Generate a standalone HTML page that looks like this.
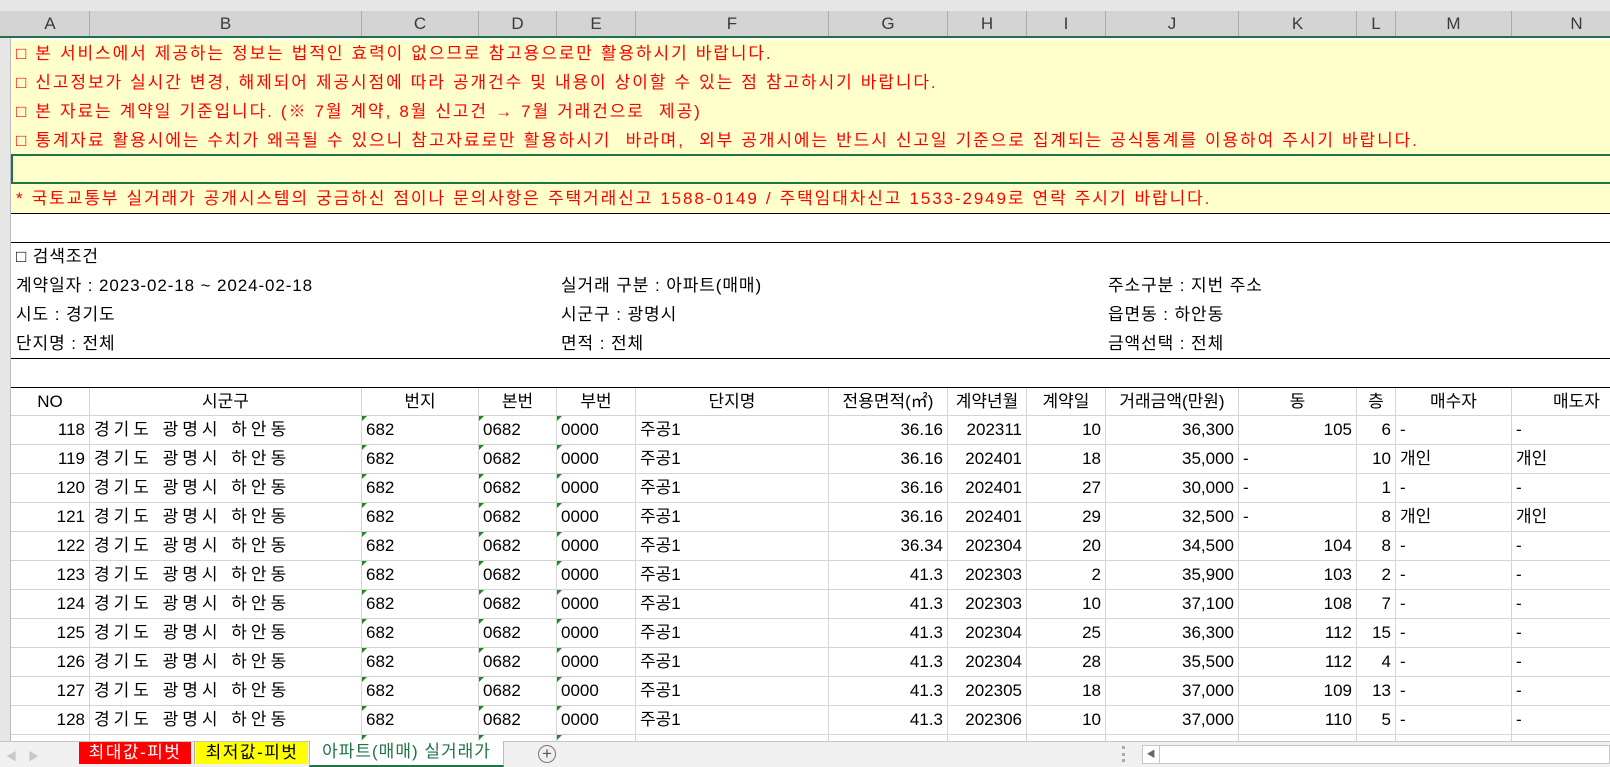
<!DOCTYPE html>
<html><head><meta charset="utf-8"><style>
*{box-sizing:border-box;margin:0;padding:0}
body{width:1610px;height:767px;overflow:hidden;background:#fff;position:relative;font-family:"Liberation Sans","Noto Sans CJK KR",sans-serif;font-size:17px;color:#000}
.abs{position:absolute}
.top{left:0;top:0;width:1610px;height:11px;background:#e6e6e6}
.colh{left:0;top:11px;height:27px;width:1610px;background:#d4d4d4;border-bottom:2px solid #217346}
.colh div{position:absolute;top:0;height:25px;line-height:26px;text-align:center;color:#3a3a3a;border-right:1px solid #ababab;font-size:17px}
.rowh{left:0;top:38px;width:11px;height:703px;background:#e6e6e6;border-right:1px solid #bbb}
.yel{left:11px;top:40px;width:1599px;height:173px;background:#ffffcc}
.rt{position:absolute;left:16px;color:#ff0000;white-space:nowrap;line-height:29px;letter-spacing:1.9px;word-spacing:0.5px}
.grow{position:absolute;left:11px;height:29px;display:grid;grid-template-columns:79px 272px 117px 78px 79px 193px 119px 79px 79px 133px 118px 39px 116px 130px;width:1631px}
.grow div{border-right:1px solid #d4d4d4;border-bottom:1px solid #d4d4d4;line-height:28px;padding:0 4px;white-space:nowrap;overflow:hidden;position:relative}
.r{text-align:right}.c{text-align:center}
.k{letter-spacing:4px;word-spacing:1px}
.t::before{content:"";position:absolute;left:0;top:0;border-top:5px solid #1f8a1f;border-right:5px solid transparent}
.st{position:absolute;white-space:nowrap;line-height:29px;letter-spacing:0.9px;word-spacing:0px}
</style></head><body>
<div class="abs top"></div>
<div class="abs colh">
<div style="left:11px;width:79px">A</div><div style="left:90px;width:272px">B</div><div style="left:362px;width:117px">C</div><div style="left:479px;width:78px">D</div><div style="left:557px;width:79px">E</div><div style="left:636px;width:193px">F</div><div style="left:829px;width:119px">G</div><div style="left:948px;width:79px">H</div><div style="left:1027px;width:79px">I</div><div style="left:1106px;width:133px">J</div><div style="left:1239px;width:118px">K</div><div style="left:1357px;width:39px">L</div><div style="left:1396px;width:116px">M</div><div style="left:1512px;width:130px">N</div>
</div>
<div class="abs rowh"></div>
<div class="abs yel"></div>
<div class="rt" style="top:39px">□ 본 서비스에서 제공하는 정보는 법적인 효력이 없으므로 참고용으로만 활용하시기 바랍니다.</div>
<div class="rt" style="top:68px">□ 신고정보가 실시간 변경, 해제되어 제공시점에 따라 공개건수 및 내용이 상이할 수 있는 점 참고하시기 바랍니다.</div>
<div class="rt" style="top:97px">□ 본 자료는 계약일 기준입니다. (※ 7월 계약, 8월 신고건 → 7월 거래건으로&nbsp; 제공)</div>
<div class="rt" style="top:126px">□ 통계자료 활용시에는 수치가 왜곡될 수 있으니 참고자료로만 활용하시기&nbsp; 바라며,&nbsp; 외부 공개시에는 반드시 신고일 기준으로 집계되는 공식통계를 이용하여 주시기 바랍니다.</div>
<div class="abs" style="left:11px;top:154px;width:1599px;height:30px;border-top:2px solid #217346;border-bottom:2px solid #217346;border-left:2px solid #217346"></div>
<div class="rt" style="top:184px">* 국토교통부 실거래가 공개시스템의 궁금하신 점이나 문의사항은 주택거래신고 1588-0149 / 주택임대차신고 1533-2949로 연락 주시기 바랍니다.</div>
<div class="abs" style="left:11px;top:213px;width:1599px;height:1px;background:#000"></div>
<div class="abs" style="left:11px;top:242px;width:1599px;height:1px;background:#000"></div>
<div class="st" style="left:16px;top:242px">□ 검색조건</div>
<div class="st" style="left:16px;top:271px">계약일자 : 2023-02-18 ~ 2024-02-18</div>
<div class="st" style="left:16px;top:300px">시도 : 경기도</div>
<div class="st" style="left:16px;top:329px">단지명 : 전체</div>
<div class="st" style="left:561px;top:271px">실거래 구분 : 아파트(매매)</div>
<div class="st" style="left:561px;top:300px">시군구 : 광명시</div>
<div class="st" style="left:561px;top:329px">면적 : 전체</div>
<div class="st" style="left:1108px;top:271px">주소구분 : 지번 주소</div>
<div class="st" style="left:1108px;top:300px">읍면동 : 하안동</div>
<div class="st" style="left:1108px;top:329px">금액선택 : 전체</div>
<div class="abs" style="left:11px;top:358px;width:1599px;height:1px;background:#000"></div>
<div class="abs" style="left:11px;top:387px;width:1599px;height:1px;background:#000"></div>
<div class="grow" style="top:388px;height:28px"><div class="c">NO</div><div class="c">시군구</div><div class="c">번지</div><div class="c">본번</div><div class="c">부번</div><div class="c">단지명</div><div class="c">전용면적(㎡)</div><div class="c">계약년월</div><div class="c">계약일</div><div class="c">거래금액(만원)</div><div class="c">동</div><div class="c">층</div><div class="c">매수자</div><div class="c">매도자</div></div>
<div class="grow" style="top:416px"><div class="r">118</div><div class="k">경기도 광명시 하안동</div><div class="t">682</div><div class="t">0682</div><div class="t">0000</div><div>주공1</div><div class="r">36.16</div><div class="r">202311</div><div class="r">10</div><div class="r">36,300</div><div class="r">105</div><div class="r">6</div><div>-</div><div>-</div></div>
<div class="grow" style="top:445px"><div class="r">119</div><div class="k">경기도 광명시 하안동</div><div class="t">682</div><div class="t">0682</div><div class="t">0000</div><div>주공1</div><div class="r">36.16</div><div class="r">202401</div><div class="r">18</div><div class="r">35,000</div><div>-</div><div class="r">10</div><div>개인</div><div>개인</div></div>
<div class="grow" style="top:474px"><div class="r">120</div><div class="k">경기도 광명시 하안동</div><div class="t">682</div><div class="t">0682</div><div class="t">0000</div><div>주공1</div><div class="r">36.16</div><div class="r">202401</div><div class="r">27</div><div class="r">30,000</div><div>-</div><div class="r">1</div><div>-</div><div>-</div></div>
<div class="grow" style="top:503px"><div class="r">121</div><div class="k">경기도 광명시 하안동</div><div class="t">682</div><div class="t">0682</div><div class="t">0000</div><div>주공1</div><div class="r">36.16</div><div class="r">202401</div><div class="r">29</div><div class="r">32,500</div><div>-</div><div class="r">8</div><div>개인</div><div>개인</div></div>
<div class="grow" style="top:532px"><div class="r">122</div><div class="k">경기도 광명시 하안동</div><div class="t">682</div><div class="t">0682</div><div class="t">0000</div><div>주공1</div><div class="r">36.34</div><div class="r">202304</div><div class="r">20</div><div class="r">34,500</div><div class="r">104</div><div class="r">8</div><div>-</div><div>-</div></div>
<div class="grow" style="top:561px"><div class="r">123</div><div class="k">경기도 광명시 하안동</div><div class="t">682</div><div class="t">0682</div><div class="t">0000</div><div>주공1</div><div class="r">41.3</div><div class="r">202303</div><div class="r">2</div><div class="r">35,900</div><div class="r">103</div><div class="r">2</div><div>-</div><div>-</div></div>
<div class="grow" style="top:590px"><div class="r">124</div><div class="k">경기도 광명시 하안동</div><div class="t">682</div><div class="t">0682</div><div class="t">0000</div><div>주공1</div><div class="r">41.3</div><div class="r">202303</div><div class="r">10</div><div class="r">37,100</div><div class="r">108</div><div class="r">7</div><div>-</div><div>-</div></div>
<div class="grow" style="top:619px"><div class="r">125</div><div class="k">경기도 광명시 하안동</div><div class="t">682</div><div class="t">0682</div><div class="t">0000</div><div>주공1</div><div class="r">41.3</div><div class="r">202304</div><div class="r">25</div><div class="r">36,300</div><div class="r">112</div><div class="r">15</div><div>-</div><div>-</div></div>
<div class="grow" style="top:648px"><div class="r">126</div><div class="k">경기도 광명시 하안동</div><div class="t">682</div><div class="t">0682</div><div class="t">0000</div><div>주공1</div><div class="r">41.3</div><div class="r">202304</div><div class="r">28</div><div class="r">35,500</div><div class="r">112</div><div class="r">4</div><div>-</div><div>-</div></div>
<div class="grow" style="top:677px"><div class="r">127</div><div class="k">경기도 광명시 하안동</div><div class="t">682</div><div class="t">0682</div><div class="t">0000</div><div>주공1</div><div class="r">41.3</div><div class="r">202305</div><div class="r">18</div><div class="r">37,000</div><div class="r">109</div><div class="r">13</div><div>-</div><div>-</div></div>
<div class="grow" style="top:706px"><div class="r">128</div><div class="k">경기도 광명시 하안동</div><div class="t">682</div><div class="t">0682</div><div class="t">0000</div><div>주공1</div><div class="r">41.3</div><div class="r">202306</div><div class="r">10</div><div class="r">37,000</div><div class="r">110</div><div class="r">5</div><div>-</div><div>-</div></div>
<div class="grow" style="top:735px"><div></div><div></div><div class="t"></div><div class="t"></div><div class="t"></div><div></div><div></div><div></div><div></div><div></div><div></div><div></div><div></div><div></div></div>
<div class="abs" style="left:0;top:741px;width:1610px;height:26px;background:#f0f0f0;border-top:1px solid #c6c6c6"></div>
<div class="abs" style="left:6px;top:748px;color:#c8c8c8;font-size:11px">◀</div>
<div class="abs" style="left:28px;top:748px;color:#c8c8c8;font-size:11px">▶</div>
<div class="abs" style="left:79px;top:742px;width:112px;height:22px;background:#ff0000;color:#fff;text-align:center;line-height:22px;letter-spacing:1.5px">최대값-피벗</div>
<div class="abs" style="left:194px;top:742px;width:1px;height:22px;background:#aaa"></div>
<div class="abs" style="left:196px;top:742px;width:112px;height:22px;background:#ffff00;color:#000;text-align:center;line-height:22px;letter-spacing:1.5px">최저값-피벗</div>
<div class="abs" style="left:309px;top:741px;width:195px;height:26px;background:#fff;color:#217346;text-align:center;line-height:22px;border-bottom:2px solid #217346;border-left:1px solid #bbb;border-right:1px solid #bbb;letter-spacing:1px">아파트(매매) 실거래가</div>
<div class="abs" style="left:538px;top:745px;width:18px;height:18px;border:1px solid #777;border-radius:50%;color:#555;text-align:center;line-height:15px;font-size:17px">+</div>
<div class="abs" style="left:1122px;top:746px;width:4px;height:16px;border-left:3px dotted #aaa"></div>
<div class="abs" style="left:1142px;top:745px;width:468px;height:19px;background:#fff;border:1px solid #c6c6c6"></div>
<div class="abs" style="left:1142px;top:745px;width:18px;height:19px;border:1px solid #c6c6c6;color:#666;font-size:9px;text-align:center;line-height:17px">◀</div>
</body></html>
